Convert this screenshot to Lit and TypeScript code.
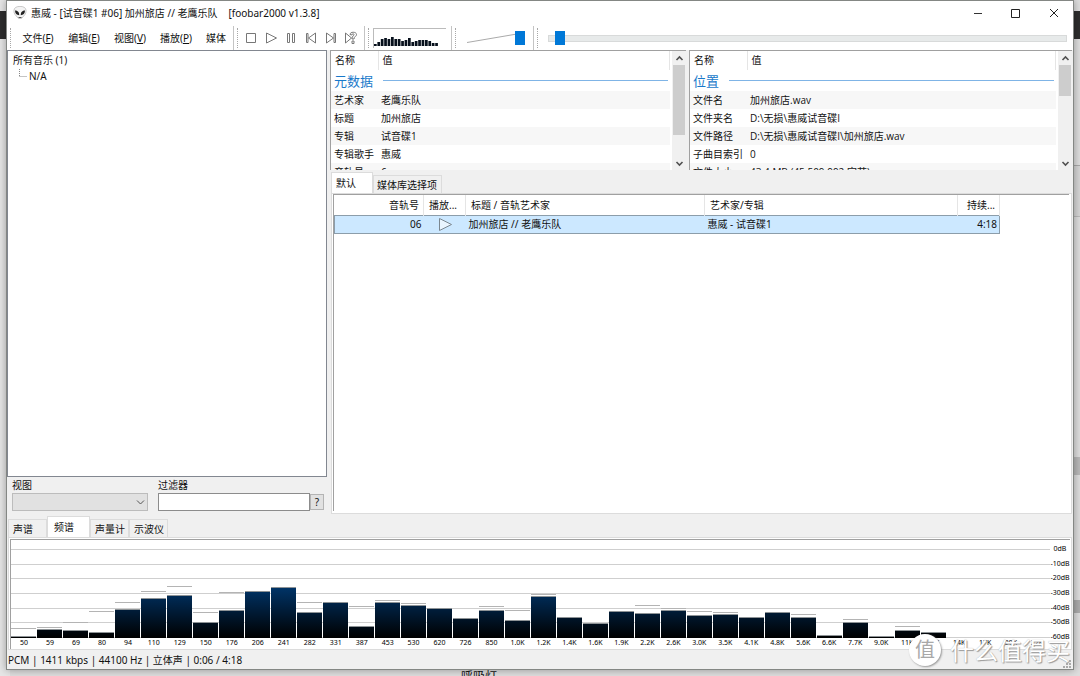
import { LitElement, html, svg, css, nothing } from "lit";
import { customElement, property } from "lit/decorators.js";

interface Band { label: string; level: number; peak?: number }
interface Row { name: string; value: string }

const BANDS: Band[] = [
  { label: "50", level: 2, peak: 10 }, { label: "59", level: 9, peak: 11 },
  { label: "69", level: 8, peak: 16 }, { label: "80", level: 6, peak: 27 },
  { label: "94", level: 29, peak: 36 }, { label: "110", level: 40, peak: 47 },
  { label: "129", level: 43, peak: 52 }, { label: "150", level: 16, peak: 26 },
  { label: "176", level: 28, peak: 46 }, { label: "206", level: 47 },
  { label: "241", level: 51 }, { label: "282", level: 26, peak: 36 },
  { label: "331", level: 36 }, { label: "387", level: 12, peak: 32 },
  { label: "453", level: 36, peak: 38 }, { label: "530", level: 33, peak: 35 },
  { label: "620", level: 30 }, { label: "726", level: 20 },
  { label: "850", level: 28, peak: 32 }, { label: "1.0K", level: 18, peak: 28 },
  { label: "1.2K", level: 42, peak: 44 }, { label: "1.4K", level: 21 },
  { label: "1.6K", level: 15 }, { label: "1.9K", level: 27 },
  { label: "2.2K", level: 25, peak: 33 }, { label: "2.6K", level: 28, peak: 30 },
  { label: "3.0K", level: 23, peak: 27 }, { label: "3.5K", level: 24, peak: 26 },
  { label: "4.1K", level: 21 }, { label: "4.8K", level: 26 },
  { label: "5.6K", level: 21, peak: 24 }, { label: "6.6K", level: 3 },
  { label: "7.7K", level: 16, peak: 19 }, { label: "9.0K", level: 2 },
  { label: "11K", level: 8, peak: 12 }, { label: "12K", level: 6 },
  { label: "14K", level: 0 }, { label: "17K", level: 0 },
  { label: "20K", level: 0 }, { label: "22K", level: 0 },
];
const DECIBELS = ["0dB", "-10dB", "-20dB", "-30dB", "-40dB", "-50dB", "-60dB"];
const MINI = [2, 4, 7, 8, 7, 9, 7, 7, 5, 6, 8, 4, 5, 6, 6, 6, 5, 3, 3];

const base = css`
  *, *::before, *::after { box-sizing: border-box; }
  button, input, select { font: inherit; color: inherit; margin: 0; padding: 0; border: 0; border-radius: 0; background: none; }
  svg { display: block; }
  table { border-collapse: collapse; border-spacing: 0; table-layout: fixed; }
  th, td { padding: 0; font-weight: normal; text-align: left; white-space: nowrap; overflow: hidden; }
`;

@customElement("property-list")
export class PropertyList extends LitElement {
  @property() heading = "";
  @property({ attribute: false }) rows: Row[] = [];
  @property() size = "narrow";
  @property({ type: Number }) thumb = 70;

  static styles = [base, css`
    :host { box-sizing: border-box; display: flex; min-width: 0; height: 120px; overflow: hidden; background: #fff; border-left: 1px solid #a0a0a0; border-top: 1px solid #a0a0a0; font-family: "Open Sans", "Noto Sans CJK SC", sans-serif; }
    .content { flex: 1; min-width: 0; overflow: hidden; padding-right: 2px; }
    table { width: 100%; }
    .narrow { width: 47px; }
    .wide { width: 57px; }
    thead th { height: 19px; padding: 0 0 2px 4px; border-right: 1px solid #e5e5e5; }
    .group { height: 21px; padding-left: 3px; font-size: 13px; line-height: 20px; color: #1979ca; }
    .title { display: flex; align-items: center; gap: 10px; }
    .title::after { content: ""; flex: 1; height: 1px; margin-right: 2px; background: #7fb4e6; }
    td, tbody th { height: 18px; padding-left: 3px; line-height: 16px; overflow: visible; }
    .row:nth-child(even) { background: #f7f7f7; }
    .scroll { flex: none; width: 14px; display: flex; flex-direction: column; background: #f0f0f0; }
    .arrow { height: 14px; display: grid; place-items: center; flex: none; }
    .thumb { margin: 0 1px 0 1px; background: #cdcdcd; }
    .space { flex: 1; }
  `];

  render() {
    const arrow = (d: string) => html`<svg width="9" height="9" viewBox="0 0 9 9"><path d=${d} fill="none" stroke="#505050" stroke-width="1.6"/></svg>`;
    return html`
      <div class="content">
        <table>
          <colgroup><col class=${this.size}><col></colgroup>
          <thead><tr><th scope="col">名称</th><th scope="col">值</th></tr></thead>
          <tbody>
            <tr><th class="group" colspan="2"><span class="title">${this.heading}</span></th></tr>
            ${this.rows.map(r => html`<tr class="row"><th scope="row">${r.name}</th><td>${r.value}</td></tr>`)}
          </tbody>
        </table>
      </div>
      <div class="scroll">
        <button class="arrow" aria-label="向上">${arrow("M1.5 6 4.5 3 7.5 6")}</button>
        <div class="thumb" style="height:${this.thumb}px"></div>
        <div class="space"></div>
        <button class="arrow" aria-label="向下">${arrow("M1.5 3 4.5 6 7.5 3")}</button>
      </div>`;
  }
}

@customElement("spectrum-view")
export class SpectrumView extends LitElement {
  static styles = [base, css`
    :host { display: grid; grid-template-columns: 1fr 20px; border-left: 1px solid #a0a0a0; border-top: 1px solid #a0a0a0; background: #fff; font-size: 7px; line-height: 8px; color: #000; }
    .plot { display: grid; grid-template-rows: 98px 11px; min-width: 0; }
    .lines, .bands { grid-area: 1 / 1; min-width: 0; }
    .lines { display: flex; flex-direction: column; justify-content: space-between; padding-top: 9px; }
    .line { height: 1px; background: #cfcfcf; }
    .bands { display: grid; grid-template-columns: repeat(40, 1fr); column-gap: 1px; }
    .band { display: flex; flex-direction: column; justify-content: flex-end; }
    .peak { height: 1px; background: #b4b4b4; }
    .bar { background: linear-gradient(to top, #000 0, #003468 51px) bottom / 100% 51px no-repeat; border-top: 1px solid #8e9396; }
    .labels { display: grid; grid-template-columns: repeat(40, 1fr); text-align: center; padding-top: 1px; }
    .scale { display: flex; flex-direction: column; justify-content: space-between; height: 96px; margin-top: 5px; text-align: center; white-space: nowrap; }
  `];

  render() {
    return html`
      <div class="plot">
        <div class="lines">${DECIBELS.map(() => html`<div class="line"></div>`)}</div>
        <div class="bands">${BANDS.map(b => html`
          <div class="band">
            ${b.peak ? html`<div class="peak" style="margin-bottom:${b.peak - b.level - 1}px"></div>` : nothing}
            ${b.level ? html`<div class="bar" style="height:${b.level}px"></div>` : nothing}
          </div>`)}</div>
        <div class="labels">${BANDS.map(b => html`<span>${b.label}</span>`)}</div>
      </div>
      <div class="scale">${DECIBELS.map(d => html`<span>${d}</span>`)}</div>`;
  }
}

@customElement("app-root")
export class AppRoot extends LitElement {
  static styles = [base, css`
    :host { box-sizing: border-box; display: block; position: relative; height: 100vh; min-height: 500px; overflow: hidden; padding: 0 6px 6px; background: #dedede; font: 10px/14px "Noto Sans", "Noto Sans CJK SC", sans-serif; color: #111; }
    .behind { position: absolute; top: 0; bottom: 0; width: 10px; display: flex; flex-direction: column; }
    .behind-left { left: 0; background: #e6e6e6; }
    .behind-right { right: 0; background: #dedede; }
    .dark { margin-top: 11px; height: 28px; background: #2d2d2d; }
    .sheet { margin-top: 126px; height: 52px; background: #d6d6d6; border-top: 1px solid #aaa; border-bottom: 1px solid #bbb; }
    .mark { margin-top: 240px; height: 18px; background: #b9b9b9; }
    .mark-low { margin-top: 125px; height: 13px; background: #adadad; }
    .caption { position: absolute; left: 461px; bottom: -8px; height: 14px; font-size: 12px; }
    .window { position: relative; height: 100%; display: flex; flex-direction: column; background: #f0f0f0; border: 1px solid #848784; box-shadow: 0 0 8px rgba(0, 0, 0, .35); }

    .titlebar { height: 25px; flex: none; display: flex; align-items: center; background: #fff; padding: 0 0 1px 6px; }
    .caption-text { flex: 1; display: flex; gap: 11px; margin-left: 4px; white-space: nowrap; }
    .caption-button { width: 38px; height: 24px; display: grid; place-items: center; }

    .bars { flex: none; height: 24px; display: grid; grid-template-columns: 227px 131px 87px 82px 1fr; background: #fff; }
    .toolbar { display: flex; align-items: center; min-width: 0; border-right: 1px solid #c4c4c4; padding-left: 3px; }
    .toolbar:last-child { border-right: 0; padding-right: 6px; }
    .toolbar::before { content: ""; flex: none; width: 1px; height: 20px; border-left: 1px dotted #a8a8a8; }
    .menu { padding-left: 4px; }
    .menu-item { padding: 0 7px; white-space: nowrap; }
    .menu-item:not(:last-child) { min-width: 46px; }
    .icon-button { width: 20px; height: 20px; display: grid; place-items: center; }
    .group-buttons { display: flex; margin-left: 3px; }
    .mini { width: 73px; height: 20px; margin-left: 4px; border-left: 1px solid #bbb; border-top: 1px solid #bbb; display: flex; align-items: flex-end; padding: 0 0 2px; }
    .volume { flex: 1; display: grid; margin: 0 8px 0 11px; align-items: center; }
    .volume > * { grid-area: 1 / 1; }
    input[type="range"] { appearance: none; width: 100%; height: 14px; }
    input[type="range"]::-webkit-slider-thumb { appearance: none; width: 10px; height: 14px; background: #0078d7; }
    .seek { flex: 1; display: grid; align-items: center; margin-left: 10px; }
    .track { grid-area: 1 / 1; height: 7px; background: #e7eaea; border: 1px solid #d8dada; }
    .seek input { grid-area: 1 / 1; }

    .main { flex: 1; min-height: 0; display: grid; grid-template-columns: 320px 1fr; gap: 3px; padding-right: 1px; }
    .library { display: flex; flex-direction: column; min-height: 0; }
    .tree { flex: 1; border: 1px solid #828790; background: #fff; padding: 1px 5px; line-height: 16px; }
    .leaf { display: flex; align-items: center; padding-left: 6px; gap: 2px; }
    .filters { display: grid; grid-template-columns: 136px 1fr 14px; grid-template-rows: 15px 18px; height: 37px; padding: 1px 3px 0 5px; }
    .filters label { line-height: 15px; }
    .filter-label { grid-column: 2 / 4; margin-left: 10px; }
    .select { display: grid; align-items: center; }
    .select > * { grid-area: 1 / 1; }
    .select select { appearance: none; width: 100%; height: 18px; background: #e1e1e1; border: 1px solid #bcbcbc; }
    .select svg { justify-self: end; margin-right: 3px; pointer-events: none; }
    .filter-input { height: 18px; margin-left: 10px; border: 1px solid #8c8c8c; background: #fff; min-width: 0; }
    .help { height: 16px; margin: 1px 0; background: #e1e1e1; border: 1px solid #b4b4b4; line-height: 12px; text-align: center; }

    .right { display: grid; grid-template-rows: 120px 1fr; min-width: 0; min-height: 0; }
    .properties { display: grid; grid-template-columns: 356fr 383fr; gap: 3px; }
    .playlists { display: flex; flex-direction: column; min-height: 0; padding-left: 1px; }
    .tabs { display: flex; align-items: flex-end; flex: none; }
    .tab { height: 18px; padding: 0 4px; background: #f0f0f0; border: 1px solid #dcdcdc; border-bottom: 0; text-align: left; line-height: 16px; white-space: nowrap; }
    .tab.selected { height: 21px; padding: 0 5px; background: #fff; }
    .tabs-top { height: 23px; }
    .tabs-top .selected { width: 42px; padding-left: 4px; }
    .tabs-top .tab:not(.selected) { padding: 0 4px 0 3px; }
    .page { flex: 1; min-height: 0; background: #fff; border: 1px solid #dcdcdc; padding: 0 2px 2px 1px; }
    .list { height: 100%; border-top: 1px solid #a0a0a0; border-left: 1px solid #a0a0a0; overflow: hidden; }
    .tracks { width: 665px; }
    .c-number { width: 89px; } .c-play { width: 42px; } .c-title { width: 239px; } .c-artist { width: 253px; } .c-time { width: 42px; }
    .tracks th { height: 20px; padding: 0 3px 0 5px; border-right: 1px solid #e5e5e5; }
    .tracks th.right-text { text-align: right; padding-left: 0; padding-right: 4px; }
    .tracks td { height: 18px; padding: 0 2px 0 3px; background: #cce8ff; border-top: 1px solid #8c9daa; border-bottom: 1px solid #8c9daa; }
    .tracks td:first-child { border-left: 1px solid #8c9daa; }
    .tracks td:last-child { border-right: 1px solid #8c9daa; }
    .tracks .right-text { text-align: right; }
    .tracks td svg { margin: 0 auto; }

    .lower { flex: none; padding: 0 1px; display: flex; flex-direction: column; }
    .tabs-low { height: 23px; }
    .tabs-low .tab { width: 39px; }
    .tabs-low .selected { width: 43px; padding-left: 6px; }
    .panel { background: #fff; border: 1px solid #dcdcdc; padding: 1px 1px 0 1px; }
    .status { flex: none; height: 19px; padding: 3px 1px 0; display: flex; justify-content: space-between; white-space: nowrap; }

    .watermark { position: absolute; right: 10px; bottom: 9px; display: flex; align-items: center; gap: 9px; color: #fff; font: 24px/34px "Noto Sans CJK SC", sans-serif; text-shadow: 1px 1px 1px #999, 0 0 1px #aaa; pointer-events: none; white-space: nowrap; }
    .seal { width: 32px; height: 32px; border-radius: 50%; background: #fff; color: #a8a8a8; font-size: 20px; line-height: 30px; text-align: center; text-shadow: none; box-shadow: 1px 1px 2px #999; }
  `];

  private icon(body: unknown, w = 14) {
    return html`<svg width=${w} height="14" viewBox="0 0 ${w} 14" fill="none" stroke="#777" stroke-width="1">${body}</svg>`;
  }

  render() {
    const buttons: [string, unknown][] = [
      ["停止", svg`<path d="M2.5 2.5h9v9h-9z"/>`],
      ["播放", svg`<path d="M2.5 2v10l10-5z"/>`],
      ["暂停", svg`<path d="M3.5 2.5h2v9h-2zM8.500 2.500h2v9h-2z"/>`],
      ["上一个", svg`<path d="M2.500 2.500h1.500v9H2.500zM11.500 2v10l-7-5z"/>`],
      ["下一个", svg`<path d="M2.500 2v10l7-5zM10 2.500h1.500v9H10z"/>`],
      ["随机", svg`<path d="M1.500 2v10l6-5z"/><path d="M6 3.500c0-3 6.500-3 6.500 0 0 2-2.500 2-2.500 4.500H8c0-3 2-3.500 2-4.500s-2-1-2 .5zM8 10h2v2.500H8z"/>`],
    ];
    const metadata = [
      { name: "艺术家", value: "老鹰乐队" }, { name: "标题", value: "加州旅店" },
      { name: "专辑", value: "试音碟1" }, { name: "专辑歌手", value: "惠威" },
      { name: "音轨号", value: "6" },
    ];
    const location = [
      { name: "文件名", value: "加州旅店.wav" }, { name: "文件夹名", value: "D:\\无损\\惠威试音碟I" },
      { name: "文件路径", value: "D:\\无损\\惠威试音碟I\\加州旅店.wav" }, { name: "子曲目索引", value: "0" },
      { name: "文件大小", value: "43.4 MB (45 509 992 字节)" },
    ];
    return html`
      <div class="behind behind-left"><div class="dark"></div></div>
      <div class="behind behind-right"><div class="dark"></div><div class="sheet"></div><div class="mark"></div><div class="mark-low"></div></div>
      <div class="caption">呼吸灯</div>
      <main class="window">
        <header class="titlebar">
          <svg width="14" height="14" viewBox="0 0 14 14">
            <path d="M2.500 1.500C.5 3 .5 6 2 8.500L5.500 12.500h3L12 8.500c1.500-2.500 1.500-5.500-.5-7-2-1.500-7-1.500-9 0z" fill="#f4f4f4" stroke="#bbb" stroke-width=".8"/>
            <path d="M2 4.500c2.500 0 4.500 1.500 4.200 4.800C3.700 9 2 7.500 2 4.500zM12 4.500c-2.500 0-4.500 1.500-4.200 4.800C10.300 9 12 7.500 12 4.500z" fill="#222"/>
            <path d="M5.500 11.500h3" stroke="#555"/>
          </svg>
          <span class="caption-text"><span>惠威 - [试音碟1 #06] 加州旅店 // 老鹰乐队</span><span>[foobar2000 v1.3.8]</span></span>
          <button class="caption-button" aria-label="最小化"><svg width="10" height="10"><path d="M1 5.500h8" stroke="#333"/></svg></button>
          <button class="caption-button" aria-label="最大化"><svg width="10" height="10"><path d="M.5 1.500h8v8h-8z" fill="none" stroke="#222"/></svg></button>
          <button class="caption-button" aria-label="关闭"><svg width="10" height="10"><path d="M1 1l8 8M9 1l-8 8" stroke="#222"/></svg></button>
        </header>
        <div class="bars">
          <nav class="toolbar">
            <div class="menu"></div>
            ${[["文件", "F"], ["编辑", "E"], ["视图", "V"], ["播放", "P"]].map(([t, k]) => html`<button class="menu-item">${t}(<u>${k}</u>)</button>`)}
            <button class="menu-item">媒体</button>
          </nav>
          <div class="toolbar"><div class="group-buttons">${buttons.map(([n, b]) => html`<button class="icon-button" aria-label=${n}>${this.icon(b)}</button>`)}</div></div>
          <div class="toolbar"><div class="mini">
            <svg width="66" height="17" viewBox="0 0 66 17">${MINI.map((h, i) => svg`<rect x=${i * 3.4} y=${17 - h} width="2.700" height=${h} fill="#07101c"/>`)}</svg>
          </div></div>
          <div class="toolbar"><div class="volume">
            <svg width="50" height="14"><path d="M0 11.500 50 3" stroke="#aaa"/></svg>
            <input type="range" aria-label="音量" min="0" max="100" value="100">
          </div></div>
          <div class="toolbar"><div class="seek">
            <div class="track"></div>
            <input type="range" aria-label="进度" min="0" max="258" step="any" value="3.500">
          </div></div>
        </div>
        <div class="main">
          <section class="library">
            <div class="tree">
              <div>所有音乐 (1)</div>
              <div class="leaf"><svg width="8" height="16"><path d="M.5 1v8M.5 8.500h8" fill="none" stroke="#888" stroke-dasharray="1 1"/></svg><span>N/A</span></div>
            </div>
            <div class="filters">
              <label for="view">视图</label><label class="filter-label" for="filter">过滤器</label>
              <div class="select"><select id="view"></select><svg width="9" height="9"><path d="M1 2.500 4.500 6 8 2.500" fill="none" stroke="#555"/></svg></div>
              <input class="filter-input" id="filter" type="text">
              <button class="help">?</button>
            </div>
          </section>
          <section class="right">
            <div class="properties">
              <property-list heading="元数据" .rows=${metadata} size="narrow" thumb="70"></property-list>
              <property-list heading="位置" .rows=${location} size="wide" thumb="31"></property-list>
            </div>
            <div class="playlists">
              <div class="tabs tabs-top" role="tablist">
                <button class="tab selected" role="tab" aria-selected="true">默认</button>
                <button class="tab" role="tab" aria-selected="false">媒体库选择项</button>
              </div>
              <div class="page"><div class="list">
                <table class="tracks">
                  <colgroup><col class="c-number"><col class="c-play"><col class="c-title"><col class="c-artist"><col class="c-time"></colgroup>
                  <thead><tr><th class="right-text">音轨号</th><th>播放...</th><th>标题 / 音轨艺术家</th><th>艺术家/专辑</th><th class="right-text">持续...</th></tr></thead>
                  <tbody><tr>
                    <td class="right-text">06</td>
                    <td><svg width="15" height="15"><path d="M1.500 1.500v12l12-6z" fill="#e9f5ff" stroke="#7b8790"/></svg></td>
                    <td>加州旅店 // 老鹰乐队</td><td>惠威 - 试音碟1</td><td class="right-text">4:18</td>
                  </tr></tbody>
                </table>
              </div></div>
            </div>
          </section>
        </div>
        <section class="lower">
          <div class="tabs tabs-low" role="tablist">
            <button class="tab" role="tab" aria-selected="false">声谱</button>
            <button class="tab selected" role="tab" aria-selected="true">频谱</button>
            <button class="tab" role="tab" aria-selected="false">声量计</button>
            <button class="tab" role="tab" aria-selected="false">示波仪</button>
          </div>
          <div class="panel"><spectrum-view></spectrum-view></div>
        </section>
        <footer class="status">
          <span>PCM | 1411 kbps | 44100 Hz | 立体声 | 0:06 / 4:18</span>
          <svg width="10" height="16"><path d="M1 14h2M4 14h2M7 14h2M4 11h2M7 11h2M7 8h2" stroke="#aaa" stroke-width="2"/></svg>
        </footer>
      </main>
      <div class="watermark"><span class="seal">值</span><span>什么值得买</span></div>`;
  }
}
